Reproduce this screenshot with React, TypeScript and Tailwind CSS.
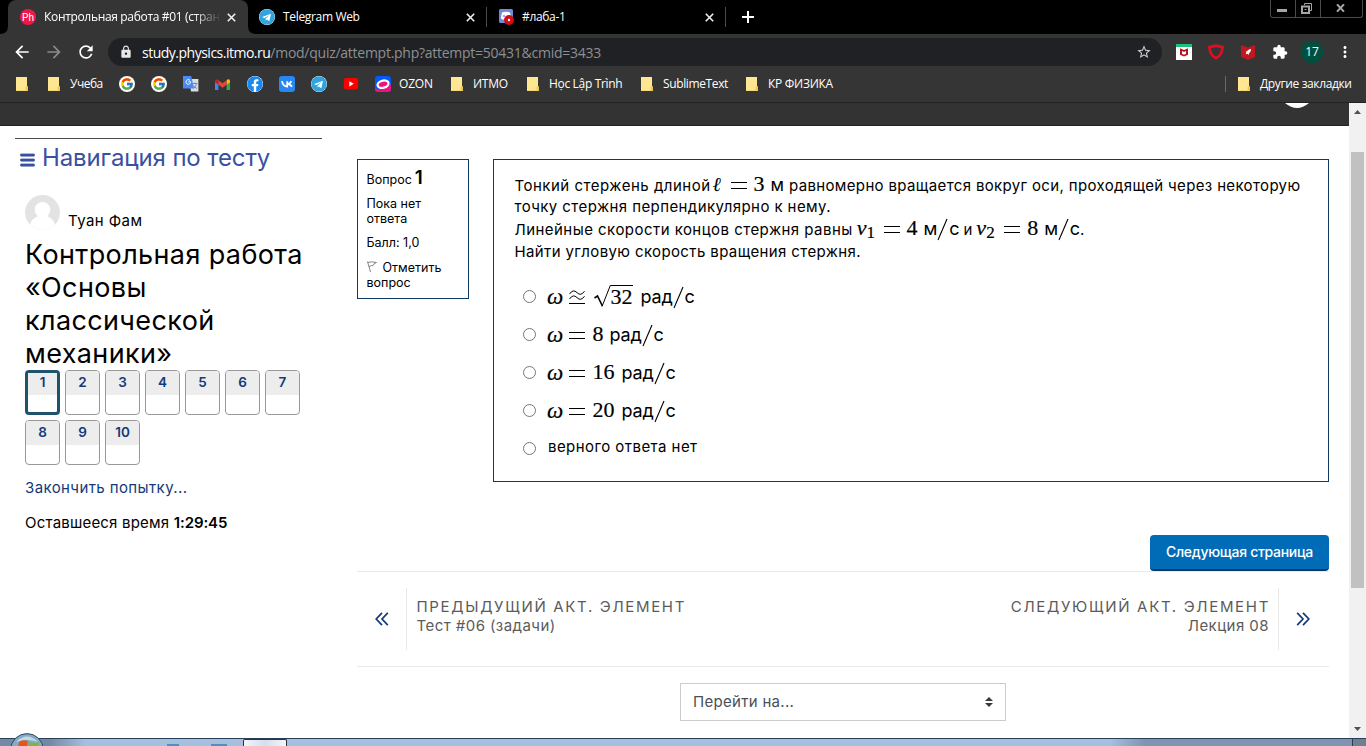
import type { ReactNode } from "react";
import { FaBars, FaFacebook, FaTelegram } from "react-icons/fa";
import { FcGoogle } from "react-icons/fc";
import { MdArrowBack, MdArrowForward, MdExtension, MdLock, MdMoreVert, MdRefresh, MdStarBorder } from "react-icons/md";

function Close({ c = "" }: { c?: string }) {
  return (
    <svg className={`h-[9px] w-[9px] shrink-0 ${c}`} viewBox="0 0 9 9" stroke="#f1f1f1" strokeWidth="1.6">
      <path d="M.8 .8 8.2 8.2M8.2 .8 .8 8.2" />
    </svg>
  );
}

function Folder() {
  return (
    <svg className="h-[14px] w-[12px] shrink-0" viewBox="0 0 12 14">
      <path d="M0 0H11V9L12 10V14H0Z" fill="#ffe693" />
      <path d="M0 13.4H12V14H0ZM9.6 14V10L11 9L12 10V14Z" fill="#f1c94f" />
    </svg>
  );
}

function Telegram() {
  return <FaTelegram className="h-4 w-4 shrink-0 rounded-full bg-white text-[#2ca5e0]" />;
}

function GoogleBadge() {
  return (
    <span className="flex h-4 w-4 items-center justify-center rounded-full bg-white">
      <FcGoogle className="h-[14px] w-[14px]" />
    </span>
  );
}

function Slot({ w, children }: { w: string; children: ReactNode }) {
  return <div className={`flex shrink-0 items-center whitespace-nowrap ${w}`}>{children}</div>;
}

function TabStrip() {
  return (
    <div className="flex h-[34px] shrink-0 items-start bg-black pl-2 text-[12px] tracking-[-0.33px] text-white">
      <div className="relative flex h-[34px] w-[240px] shrink-0 items-center rounded-t-lg bg-[#353535] pl-3">
        <svg className="absolute bottom-0 -left-2 h-2 w-2" viewBox="0 0 8 8"><path d="M8 0V8H0Q8 8 8 0Z" fill="#353535" /></svg>
        <svg className="absolute -right-2 bottom-0 h-2 w-2" viewBox="0 0 8 8"><path d="M0 0V8H8Q0 8 0 0Z" fill="#353535" /></svg>
        <span className="flex h-4 w-4 shrink-0 items-center justify-center rounded-full bg-[#ec1946] font-['Roboto',sans-serif] text-[10px] tracking-normal">Ph</span>
        <span className="ml-2 w-[183px] whitespace-nowrap [mask-image:linear-gradient(to_right,black_150px,transparent_177px)]">
          Контрольная работа #01 (стран
        </span>
        <Close />
      </div>
      <div className="flex h-[34px] w-[239px] shrink-0 items-center pl-[11px]">
        <Telegram />
        <span className="ml-2 w-[183px]">Telegram Web</span>
        <Close />
        <span className="ml-auto h-5 w-px bg-[#4a4a4a]" />
      </div>
      <div className="flex h-[34px] w-[239px] shrink-0 items-center pl-3">
        <svg className="h-4 w-[15px] shrink-0" viewBox="0 0 15 16">
          <rect width="14" height="14" rx="1.5" fill="#7289da" />
          <path d="M3 3.5Q7 2 11 3.5L12.4 9Q11 11 9.4 10.5H4.6Q3 11 1.8 9Z" fill="#fff" />
          <circle cx="5" cy="7" r="1" fill="#7289da" />
          <circle cx="10" cy="11" r="5" fill="#d40c14" />
          <circle cx="10" cy="11" r="1.2" fill="#fff" />
        </svg>
        <span className="ml-2 w-[183px]">#лаба-1</span>
        <Close />
        <span className="ml-auto h-5 w-px bg-[#4a4a4a]" />
      </div>
      <svg className="mt-[11px] ml-4 h-3 w-3 shrink-0" viewBox="0 0 12 12" stroke="#fff" strokeWidth="2">
        <path d="M6 0V12M0 6H12" />
      </svg>
      <div className="mr-[3px] ml-auto flex h-[18px] w-[93px] rounded-b-[3px] border border-t-0 border-[#4b4b4b]">
        <div className="flex w-[25px] justify-center border-r border-[#4b4b4b] pt-[9px] pr-[2px]">
          <span className="h-[3px] w-[10px] bg-[#a5a5a5]" />
        </div>
        <div className="flex w-[25px] justify-center border-r border-[#4b4b4b] pt-[3px] pr-[4px]">
          <svg className="h-[11px] w-[11px]" viewBox="0 0 11 11" fill="none" stroke="#a5a5a5">
            <path d="M3.5 2V.5H10.5V7.5H9" />
            <rect x="1" y="3.5" width="7" height="6.5" strokeWidth="2" />
            <path d="M3.5 6.5H5.5" />
          </svg>
        </div>
        <div className="flex flex-1 justify-center pt-1 pr-[2px]">
          <svg className="h-2 w-[9px]" viewBox="0 0 9 8" stroke="#a5a5a5" strokeWidth="2">
            <path d="M1 .3 8 7.7M8 .3 1 7.7" />
          </svg>
        </div>
      </div>
    </div>
  );
}

function Toolbar() {
  return (
    <div className="flex h-9 shrink-0 items-center bg-[#353535] text-white">
      <MdArrowBack className="ml-3 h-5 w-5" />
      <MdArrowForward className="ml-3 h-5 w-5 text-[#8a8a8a]" />
      <MdRefresh className="ml-3 h-5 w-5" />
      <div className="ml-3 flex h-7 w-[1054px] items-center rounded-full bg-[#202124] pl-[11px]">
        <MdLock className="h-[14px] w-[14px] text-[#e8e8e8]" />
        <span className="ml-[9px] whitespace-nowrap text-[14px]">
          <span className="tracking-[-0.5px]">study.physics.itmo.ru</span>
          <span className="tracking-[-0.26px] text-[#8d9093]">/mod/quiz/attempt.php?attempt=50431&amp;cmid=3433</span>
        </span>
        <MdStarBorder className="mr-[10px] ml-auto h-4 w-4 text-[#cfcfcf]" />
      </div>
      <svg className="ml-[14px] h-4 w-4" viewBox="0 0 16 16">
        <path d="M0 0H16V16H0Z" fill="#fff" />
        <path d="M0 0H16V3H0Z" fill="#1fc07e" />
        <path d="M4 4.2 8 6 12 4.2V10.8L8 12.6 4 10.8Z" fill="#b5151d" />
        <path d="M6 7 8 8 10 7V9.8L8 10.8 6 9.8Z" fill="#fff" />
      </svg>
      <svg className="ml-4 h-4 w-4" viewBox="0 0 16 16" fill="none" stroke="#d90f23" strokeWidth="2.8" strokeLinejoin="round">
        <path d="M8 1.6C10 2.4 12 2.8 14.6 2.8C14.4 8 12.5 12 8 14.2C3.5 12 1.6 8 1.4 2.8C4 2.8 6 2.4 8 1.6Z" />
      </svg>
      <svg className="ml-4 h-4 w-4" viewBox="0 0 16 16">
        <path d="M1 1 8 3.4 15 1V13L8 16 1 13Z" fill="#c01820" />
        <path d="M11 5C9.2 5.1 8 6 7.2 7.2L5.4 7.8 6.4 8.8 5.6 10.6 7.4 9.8 8.6 11 9 9.2C10.4 8.2 11 7.2 11 5Z" fill="#fff" />
      </svg>
      <MdExtension className="ml-4 h-4 w-4" />
      <span className="ml-[13px] flex h-[22px] w-[22px] items-center justify-center rounded-full bg-[#00503f] text-[12px]">17</span>
      <MdMoreVert className="ml-[13px] h-[18px] w-[18px]" />
    </div>
  );
}

function Bookmarks() {
  return (
    <div className="flex h-8 shrink-0 items-start bg-[#353535] pt-[6px] pl-4 text-[12px] tracking-[-0.37px] text-white">
      <div className="flex h-4 flex-1 items-center">
        <Slot w="w-8"><Folder /></Slot>
        <Slot w="w-[71px]"><Folder /><span className="ml-[10px] tracking-[-0.5px]">Учеба</span></Slot>
        <Slot w="w-8"><GoogleBadge /></Slot>
        <Slot w="w-8"><GoogleBadge /></Slot>
        <Slot w="w-8">
          <svg className="h-4 w-4" viewBox="0 0 16 16">
            <path d="M6 3H15.4V15.6H8Z" fill="#d9dde2" />
            <path d="M9.5 7.5H14.5M12 6.5V7.5M10.3 12.5Q13 11 13.6 7.5M10.5 9.5Q11.5 11.5 14 12.5" stroke="#66788c" fill="none" strokeWidth=".8" />
            <path d="M0 0H8.2L11 12.5H0Z" fill="#4a8af4" />
            <path d="M7.8 5.8H5.4M7 4.4A2.3 2.3 0 1 0 7.6 6.2" stroke="#fff" fill="none" />
          </svg>
        </Slot>
        <Slot w="w-8">
          <svg className="h-[11px] w-[15px]" viewBox="0 0 15 11">
            <path d="M0 2V11H3.4V4Z" fill="#4285f4" />
            <path d="M15 2V11H11.6V4Z" fill="#34a853" />
            <path d="M11.6 5.8V1.2Q13 -.2 14.4 .6Q15 1 15 3.2Z" fill="#fbbc04" />
            <path d="M3.4 5.8V1.2Q2 -.2 .6 .6Q0 1 0 3.2Z" fill="#c5221f" />
            <path d="M3.4 1.2 7.5 4.3 11.6 1.2V5.8L7.5 8.8 3.4 5.8Z" fill="#ea4335" />
          </svg>
        </Slot>
        <Slot w="w-8"><FaFacebook className="h-4 w-4 rounded-full bg-white text-[#1689f5]" /></Slot>
        <Slot w="w-8">
          <svg className="h-4 w-4" viewBox="0 0 16 16">
            <rect width="16" height="16" rx="3" fill="#2787f5" />
            <path d="M3 5.2Q4 10.6 8.2 10.6V5.2M8.4 8.1Q11 7.8 12.4 5.2M8.4 8.1Q11.4 8.2 12.9 10.8" fill="none" stroke="#fff" strokeWidth="1.8" />
          </svg>
        </Slot>
        <Slot w="w-8"><Telegram /></Slot>
        <Slot w="w-8">
          <svg className="h-[12px] w-4" viewBox="0 0 16 12">
            <rect x=".8" width="14.4" height="11.5" rx="2.4" fill="#f00" />
            <path d="M6.3 3.2 10.8 5.8 6.3 8.4Z" fill="#fff" />
          </svg>
        </Slot>
        <Slot w="w-[76px]">
          <svg className="h-4 w-4" viewBox="0 0 16 16">
            <rect width="16" height="16" rx="3" fill="#005bff" />
            <path d="M0 12Q8 16 16 8V13Q16 16 13 16H3Q0 16 0 13Z" fill="#f1117e" />
            <ellipse cx="8" cy="8.2" rx="5.6" ry="3.6" transform="rotate(-14 8 8)" fill="#f1117e" stroke="#fff" strokeWidth="2.2" />
          </svg>
          <span className="ml-2 tracking-[-0.2px]">OZON</span>
        </Slot>
        <Slot w="w-[76px]"><Folder /><span className="ml-[10px] tracking-[-0.28px]">ИТМО</span></Slot>
        <Slot w="w-[114px]"><Folder /><span className="ml-[10px] tracking-[-0.33px]">Học Lập Trình</span></Slot>
        <Slot w="w-[105px]"><Folder /><span className="ml-[10px]">SublimeText</span></Slot>
        <Slot w="w-[100px]"><Folder /><span className="ml-[10px] tracking-[-0.28px]">КР ФИЗИКА</span></Slot>
        <span className="mr-3 ml-auto h-4 w-px bg-[#6a6a6a]" />
        <Slot w="w-[128px]"><Folder /><span className="ml-[10px]">Другие закладки</span></Slot>
      </div>
    </div>
  );
}

const NAV = [1, 2, 3, 4, 5, 6, 7, 8, 9, 10];

function Sidebar() {
  return (
    <aside className="ml-[15px] w-[307px] shrink-0 pt-3">
      <div className="h-px bg-[#4d4d4d]" />
      <h2 className="flex h-[38px] items-center pl-[5px] text-[24px] leading-[38px] tracking-[-0.12px] whitespace-nowrap text-[#3a50a0]">
        <FaBars className="mt-[3px] mr-[7px] h-4 w-[15px]" strokeWidth="20" stroke="currentColor" />
        Навигация по тесту
      </h2>
      <div className="pl-[10px]">
        <div className="mt-[17px] flex h-9 items-end">
          <svg className="h-[35px] w-[35px]" viewBox="0 0 35 35">
            <defs>
              <clipPath id="avatar"><circle cx="17.5" cy="17.5" r="17.5" /></clipPath>
            </defs>
            <g clipPath="url(#avatar)">
              <rect width="35" height="35" fill="#e3e3e3" />
              <path d="M17.5 7C21.8 7 25.3 10.3 25.3 14.4C25.3 17.3 24 19.6 22 21C26 22.6 28.6 25.2 30 29.5L26 36H9L5 29.5C6.4 25.2 9 22.6 13 21C11 19.6 9.7 17.3 9.7 14.4C9.7 10.3 13.2 7 17.5 7Z" fill="#fff" />
            </g>
          </svg>
          <span className="ml-2 h-[26px] text-[15px] leading-[34px] tracking-[0.42px]">Туан Фам</span>
        </div>
        <h3 className="mt-2 text-[27px] leading-[33px] tracking-[0.37px] whitespace-nowrap">
          Контрольная работа
          <br />
          «Основы
          <br />
          классической
          <br />
          механики»
        </h3>
        <div className="flex w-[290px] flex-wrap gap-[5px]">
          {NAV.map((n) => (
            <div
              key={n}
              className={`h-[45px] w-[35px] overflow-hidden rounded-[4px] text-center text-[13.5px] font-semibold text-[#123a78] ${
                n === 1 ? "border-[3px] border-[#1f536b]" : "border border-[#989898]"
              }`}
            >
              <div className={`bg-[#ededed] ${n === 1 ? "h-[22px] leading-[19px]" : "h-6 leading-[23px]"}`}>{n}</div>
            </div>
          ))}
        </div>
        <div className="mt-3 text-[15px] leading-[22px] tracking-[0.4px] text-[#123a78]">Закончить попытку...</div>
        <div className="mt-[13px] text-[15px] leading-[22px] whitespace-nowrap">
          <span className="tracking-[0.2px]">Оставшееся время </span>
          <span className="font-semibold tracking-[-0.1px]">1:29:45</span>
        </div>
      </div>
    </aside>
  );
}

function Eq({ c = "" }: { c?: string }) {
  return (
    <svg className={`inline-block h-[7px] w-4 shrink-0 ${c}`} viewBox="0 0 16 7">
      <path d="M0 .5H16M0 6.5H16" stroke="#000" />
    </svg>
  );
}

function Unit({ c, first }: { c: string; first: string }) {
  return (
    <span className={`inline-flex items-center text-[18px] leading-[22px] ${c}`}>
      <span className="tracking-[-0.2px]">{first}</span>
      <svg className="mr-px h-[23px] w-[11px] shrink-0" viewBox="0 0 11 23">
        <path d="M1 22 10 1" stroke="#000" strokeWidth="1.1" />
      </svg>
      <span>с</span>
    </span>
  );
}

function Num({ children, c = "" }: { children: ReactNode; c?: string }) {
  return (
    <span className={`inline-block font-['Liberation_Serif',serif] text-[22px] leading-[22px] [-webkit-text-stroke:0.2px_#000] ${c}`}>
      {children}
    </span>
  );
}

function Sub({ children }: { children: ReactNode }) {
  return (
    <span className="mt-[7px] inline-block w-2 font-['Liberation_Serif',serif] text-[17px] leading-[17px] [-webkit-text-stroke:0.2px_#000]">
      {children}
    </span>
  );
}

function Radio() {
  return <span className="h-[13px] w-[13px] shrink-0 rounded-full border border-[#767676] bg-white" />;
}

function Option({ children }: { children: ReactNode }) {
  return (
    <div className="flex h-[38px] items-center">
      <Radio />
      <span className="mt-[2px] ml-[11.5px] w-[21.5px] font-['Liberation_Serif',serif] text-[23px] leading-[24px] italic [-webkit-text-stroke:0.2px_#000]">ω</span>
      {children}
    </div>
  );
}

function Question() {
  return (
    <div className="h-[323px] w-[836px] border border-[#0f3a62] pt-[14px] pl-[20.5px] text-[15px] leading-[22px]">
      <div className="flex h-[22px] items-center whitespace-nowrap">
        <span className="pt-[2px] tracking-[0.5px]">Тонкий стержень длиной</span>
        <span className="ml-[2px] -mt-[2px] w-[17px] font-['Liberation_Serif',serif] text-[20px] leading-[22px] italic">ℓ</span>
        <Eq c="ml-px" />
        <Num c="ml-[7px] -mt-[2px]">3</Num>
        <span className="ml-[6px] text-[17.5px]">м</span>
        <span className="ml-[5px] pt-[2px] tracking-[0.35px]">равномерно вращается вокруг оси, проходящей через некоторую</span>
      </div>
      <div className="tracking-[0.42px]">точку стержня перпендикулярно к нему.</div>
      <div className="flex h-[22px] items-center whitespace-nowrap">
        <span className="pt-[2px] tracking-[0.46px]">Линейные скорости концов стержня равны</span>
        <Num c="ml-1 -mt-[2px] italic">v</Num>
        <Sub>1</Sub>
        <Eq c="ml-[9px]" />
        <Num c="ml-[7px] -mt-[2px]">4</Num>
        <Unit c="ml-[6px]" first="м" />
        <span className="ml-1 pt-[2px]">и</span>
        <Num c="ml-[4px] -mt-[2px] italic">v</Num>
        <Sub>2</Sub>
        <Eq c="ml-[10px]" />
        <Num c="ml-[7px] -mt-[2px]">8</Num>
        <Unit c="ml-[6px]" first="м" />
        <span className="pt-[2px]">.</span>
      </div>
      <div className="pt-px tracking-[0.38px]">Найти угловую скорость вращения стержня.</div>
      <div className="mt-[14px] pl-2">
        <Option>
          <svg className="mt-[2px] h-[15px] w-4 shrink-0" viewBox="0 0 16 15" fill="none" stroke="#000">
            <path d="M.5 4Q4.2 -1.4 8 2.6T15.5 1.2M.5 9Q4.2 3.6 8 7.6T15.5 6.2M0 13.5H16" />
          </svg>
          <svg className="ml-[9px] h-[24px] w-[17px] shrink-0" viewBox="0 0 17 24" fill="none" stroke="#000">
            <path d="M.5 14 3.5 12 8.4 22" strokeWidth="1.6" />
            <path d="M8 22.5 16.5 1" />
          </svg>
          <Num c="border-t border-black">32</Num>
          <Unit c="ml-[8px] mt-[2px]" first="рад" />
        </Option>
        <Option><Eq c="mt-[2px]" /><Num c="ml-[8px]">8</Num><Unit c="ml-[6px] mt-[2px]" first="рад" /></Option>
        <Option><Eq c="mt-[2px]" /><Num c="ml-[8px]">16</Num><Unit c="ml-[7px] mt-[2px]" first="рад" /></Option>
        <Option><Eq c="mt-[2px]" /><Num c="ml-[8px]">20</Num><Unit c="ml-[7px] mt-[2px]" first="рад" /></Option>
        <div className="flex h-[38px] items-center">
          <Radio />
          <span className="mb-[2px] ml-[12.5px] tracking-[0.45px]">верного ответа нет</span>
        </div>
      </div>
    </div>
  );
}

function Info() {
  return (
    <div className="h-[140px] w-[112px] border border-[#0f3a62] pt-[5px] pl-[8.5px] text-[12.5px] leading-[15px]">
      <div className="flex h-[26px] items-baseline whitespace-nowrap">
        Вопрос<span className="ml-[3px] text-[19px] leading-[26px] font-semibold">1</span>
      </div>
      <div className="mt-[5px]">Пока нет<br />ответа</div>
      <div className="mt-[9px]">Балл: 1,0</div>
      <div className="mt-[10px]">
        <svg className="mr-[6px] -mt-1 inline-block h-[11px] w-[10px]" viewBox="0 0 10 11" fill="none" stroke="#777" strokeWidth=".9">
          <path d="M.5 .5 3.5 11M.8 1.5Q4 .2 9.5 1.5Q6.5 2.5 6 4.5Q4.5 4.5 2 5.5" />
        </svg>
        Отметить<br />вопрос
      </div>
    </div>
  );
}

function Chevrons({ flip = false }: { flip?: boolean }) {
  return (
    <svg className={`h-[14px] w-[14px] ${flip ? "-ml-[2px] rotate-180" : "ml-px"}`} viewBox="0 0 14 14" fill="none" stroke="#123a78" strokeWidth="1.7">
      <path d="M7 .8 1.2 7 7 13.2M12.8 .8 7 7 12.8 13.2" />
    </svg>
  );
}

export default function App() {
  return (
    <div className="flex h-[746px] w-[1366px] flex-col overflow-hidden bg-white font-['Open_Sans','Noto_Sans',sans-serif]">
      <TabStrip />
      <Toolbar />
      <Bookmarks />
      <div className="h-px shrink-0 bg-[#222]" />
      <div className="flex h-[635px] shrink-0 font-['Inter','Roboto',sans-serif] text-black">
        <div className="w-[1349px]">
          <div className="flex h-[23px] justify-end overflow-hidden border-b border-[#222] bg-[#333]">
            <svg className="mr-[40px] h-[5px] w-6" viewBox="0 0 24 5"><path d="M0 0H24Q12 10 0 0Z" fill="#fff" /></svg>
          </div>
          <div className="flex">
            <Sidebar />
            <main className="ml-[35px] w-[972px] pt-[33px]">
              <div className="flex justify-between">
                <Info />
                <Question />
              </div>
              <div className="mt-[53px] flex justify-end">
                <button className="h-9 w-[179px] rounded-[4px] border-b-2 border-[#003a66] bg-[#006cb7] pb-px text-[14px] font-medium tracking-[-0.3px] text-white">
                  Следующая страница
                </button>
              </div>
              <div className="flex h-24 items-start justify-between border-y border-[#e9e9e9] pt-4 text-[15px] leading-[19px] text-[#5b5b5b]">
                <div className="flex h-[62px]">
                  <div className="flex w-[50px] items-center justify-center border-r border-[#e9e9e9]"><Chevrons /></div>
                  <div className="pt-[9px] pl-[9.5px]">
                    <div className="tracking-[1.67px]">ПРЕДЫДУЩИЙ АКТ. ЭЛЕМЕНТ</div>
                    <div className="tracking-[0.45px]">Тест #06 (задачи)</div>
                  </div>
                </div>
                <div className="flex h-[62px]">
                  <div className="pt-[9px] pr-2 text-right">
                    <div className="tracking-[1.68px]">СЛЕДУЮЩИЙ АКТ. ЭЛЕМЕНТ</div>
                    <div className="pr-px tracking-[0.45px]">Лекция 08</div>
                  </div>
                  <div className="flex w-[51px] items-center justify-center border-l border-[#e9e9e9]"><Chevrons flip /></div>
                </div>
              </div>
              <div className="mt-4 ml-[323px] flex h-[38px] w-[326px] items-center justify-between border border-[#cacdd0] pr-3 pl-3 text-[15px] tracking-[0.3px] text-[#495057]">
                Перейти на...
                <svg className="h-[10px] w-2" viewBox="0 0 8 10"><path d="M0 4H8L4 0ZM0 6H8L4 10Z" fill="#343a40" /></svg>
              </div>
            </main>
          </div>
        </div>
        <div className="flex w-[17px] flex-col items-center bg-[#f1f1f1]">
          <svg className="mt-[7px] h-1 w-[7px]" viewBox="0 0 7 4"><path d="M0 4 3.5 0 7 4Z" fill="#505050" /></svg>
          <div className="mt-[38px] h-[436px] w-[13px] bg-[#c1c1c1]" />
          <svg className="mt-auto mb-[7px] h-1 w-[7px]" viewBox="0 0 7 4"><path d="M0 0 3.5 4 7 0Z" fill="#505050" /></svg>
        </div>
      </div>
      <div className="relative flex h-2 shrink-0 border-t border-[#2c3f58] bg-[linear-gradient(to_right,#7489a3_50px,#a5bfdf_85px,#a5bfdf_1110px,#7f94b0_1145px,#7f94b0)]">
        <div className="mt-[5px] ml-[167px] h-[2px] w-3 bg-[#4f90bd]" />
        <div className="mt-[5px] ml-8 h-[2px] w-4 bg-[#4f90bd]" />
        <div className="ml-[16px] h-2 w-11 rounded-t-[2px] border border-b-0 border-[#2b3442] bg-linear-to-r from-[#f3f6fa] via-[#d5dfeb] to-[#f3f6fa]" />
        <div className="ml-auto w-[14px] border-l border-[#303c4c] bg-[#6d7f93]" />
        <svg className="absolute top-[-6px] left-[10px] h-[14px] w-[34px]" viewBox="0 0 34 14">
          <circle cx="17" cy="17" r="16.4" fill="#86a9c4" stroke="#2c4a68" />
          <path d="M6 9Q17 -2 28 9Q17 5 6 9Z" fill="#c3d9e6" />
          <path d="M9 9Q13 6 18 8L17 14H8Z" fill="#e2561d" />
          <path d="M19 9Q24 11 29 9L28 14H18Z" fill="#7fb53c" />
        </svg>
      </div>
    </div>
  );
}
